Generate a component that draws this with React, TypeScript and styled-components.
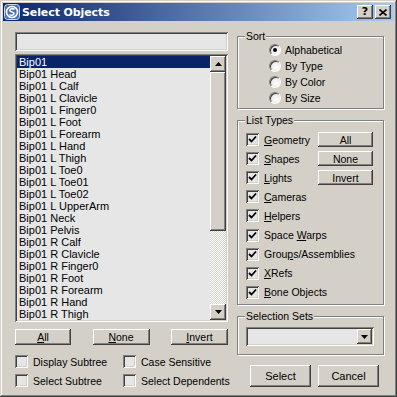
import React from 'react'
import styled, { createGlobalStyle } from 'styled-components'

const GlobalStyle = createGlobalStyle`
  html, body {
    margin: 0;
    padding: 0;
    background: #d4d0c8;
  }
  body {
    font-family: "Liberation Sans", Arial, sans-serif;
    font-size: 10.5px;
    color: #000;
  }
`

const FACE = '#d4d0c8'
const FIELD = '#e6e6e6'

const raised = `
  background: ${FACE};
  box-shadow: inset -1px -1px 0 #404040, inset 1px 1px 0 #ffffff,
    inset -2px -2px 0 #808080, inset 2px 2px 0 ${FACE};
`

const sunken = `
  box-shadow: inset 1px 1px 0 #808080, inset -1px -1px 0 #ffffff,
    inset 2px 2px 0 #404040, inset -2px -2px 0 ${FACE};
`

const Window = styled.div`
  width: 397px;
  height: 397px;
  box-sizing: border-box;
  padding: 3px;
  background: ${FACE};
  box-shadow: inset -1px -1px 0 #404040, inset 1px 1px 0 ${FACE},
    inset -2px -2px 0 #808080, inset 2px 2px 0 #ffffff;
  display: flex;
  flex-direction: column;
`

const TitleBar = styled.div`
  height: 18px;
  flex-shrink: 0;
  display: flex;
  align-items: center;
  padding-left: 1px;
  background: linear-gradient(to right, #0a246a, #a6caf0);
`

const TitleText = styled.span`
  margin-left: 2px;
  font-family: "DejaVu Sans", Verdana, sans-serif;
  font-weight: bold;
  font-size: 11px;
  color: #ffffff;
  letter-spacing: -0.1px;
`

const CaptionButtons = styled.div`
  margin-left: auto;
  display: flex;
  gap: 2px;
  padding-right: 3px;
`

const CaptionButton = styled.div`
  width: 16px;
  height: 14px;
  ${raised}
  display: flex;
  align-items: center;
  justify-content: center;
  font-family: "DejaVu Sans", sans-serif;
  font-weight: bold;
  font-size: 11px;
  line-height: 14px;
`

const Body = styled.div`
  display: flex;
  gap: 9px;
  padding: 11px 10px 0 12px;
`

const LeftCol = styled.div`
  width: 213px;
  display: flex;
  flex-direction: column;
`

const SearchField = styled.div`
  height: 19px;
  background: ${FIELD};
  ${sunken}
`

const ListBox = styled.div`
  margin-top: 3px;
  height: 268px;
  box-sizing: border-box;
  padding: 2px;
  background: ${FIELD};
  ${sunken}
  display: flex;
`

const Items = styled.div`
  flex: 1;
  display: flex;
  flex-direction: column;
`

const Item = styled.div<{ $selected?: boolean }>`
  height: 12px;
  line-height: 12px;
  font-size: 11px;
  padding-left: 2px;
  white-space: nowrap;
  background: ${(p) => (p.$selected ? '#0a246a' : 'transparent')};
  color: ${(p) => (p.$selected ? '#ffffff' : '#000000')};
`

const ScrollBar = styled.div`
  width: 16px;
  display: flex;
  flex-direction: column;
`

const ScrollButton = styled.div`
  height: 16px;
  ${raised}
  display: flex;
  align-items: center;
  justify-content: center;
`

const ScrollThumb = styled.div`
  height: 159px;
  ${raised}
`

const ScrollTrack = styled.div`
  flex: 1;
  background: repeating-conic-gradient(#ffffff 0 25%, ${FACE} 0 50%) 0 0 / 2px 2px;
`

const ButtonRow = styled.div`
  margin-top: 7px;
  display: flex;
  justify-content: space-between;
`

const Button = styled.div<{ $w: number; $h: number }>`
  width: ${(p) => p.$w}px;
  height: ${(p) => p.$h}px;
  ${raised}
  display: flex;
  align-items: center;
  justify-content: center;
  line-height: 12px;
  font-size: ${(p) => (p.$h > 18 ? 11 : 10.5)}px;
`

const OptionGrid = styled.div`
  margin-top: 10px;
  display: grid;
  grid-template-columns: 108px 1fr;
  row-gap: 6px;
`

const CheckLabel = styled.div`
  display: flex;
  align-items: center;
  gap: 5px;
  height: 13px;
  white-space: nowrap;
`

const Box = styled.div`
  width: 13px;
  height: 13px;
  flex-shrink: 0;
  background: ${FIELD};
  ${sunken}
  display: flex;
  align-items: center;
  justify-content: center;
`

const RightCol = styled.div`
  width: 147px;
  display: flex;
  flex-direction: column;
`

const Group = styled.div<{ $mt: number; $h: number }>`
  position: relative;
  margin-top: ${(p) => p.$mt}px;
  height: ${(p) => p.$h}px;
  box-sizing: border-box;
  border: 1px solid #808080;
  box-shadow: inset 1px 1px 0 #ffffff, 1px 1px 0 #ffffff;
`

const GroupCaption = styled.span`
  position: absolute;
  top: -7px;
  left: 7px;
  padding: 0 1px;
  line-height: 12px;
  background: ${FACE};
`

const RadioList = styled.div`
  padding: 5px 0 0 31px;
  display: flex;
  flex-direction: column;
`

const RadioRow = styled.div`
  height: 16px;
  display: flex;
  align-items: center;
  gap: 4px;
`

const Radio = styled.div`
  width: 12px;
  height: 12px;
  box-sizing: border-box;
  border-radius: 50%;
  border: 1px solid;
  border-color: #808080 #ffffff #ffffff #808080;
  background: radial-gradient(circle at 60% 60%, #ffffff 0, ${FIELD} 70%);
  box-shadow: inset 1px 1px 0 #404040;
  display: flex;
  align-items: center;
  justify-content: center;
`

const Dot = styled.div`
  width: 4px;
  height: 4px;
  border-radius: 50%;
  background: #000;
`

const TypesGrid = styled.div`
  padding: 9px 10px 0 8px;
  display: grid;
  grid-template-columns: minmax(0, 1fr) 55px;
  grid-auto-rows: 19.1px;
`

const TypeCell = styled.div`
  grid-column: 1;
  display: flex;
  align-items: center;
`

const TypeButton = styled(Button)`
  grid-column: 2;
  align-self: center;
`

const ComboWrap = styled.div`
  padding: 10px 9px 0 8px;
`

const Combo = styled.div`
  height: 19px;
  box-sizing: border-box;
  padding: 2px;
  background: ${FIELD};
  ${sunken}
  display: flex;
  justify-content: flex-end;
`

const ComboButton = styled.div`
  width: 15px;
  ${raised}
  display: flex;
  align-items: center;
  justify-content: center;
`

const Footer = styled.div`
  margin-top: 10px;
  display: flex;
  justify-content: flex-end;
  gap: 7px;
  padding-right: 5px;
`

const Key = styled.u`
  text-decoration-thickness: 1px;
  text-underline-offset: 1px;
`

const Arrow = ({ up }: { up?: boolean }) => (
  <svg width="7" height="4" viewBox="0 0 7 4">
    <path d={up ? 'M3.5 0 L7 4 L0 4 Z' : 'M0 0 L7 0 L3.5 4 Z'} fill="#000" />
  </svg>
)

const Check = () => (
  <svg width="9" height="9" viewBox="0 0 9 9">
    <path d="M1 4 L3.5 6.5 L8 1.5" stroke="#000" strokeWidth="1.8" fill="none" />
  </svg>
)

const CheckBox = ({ checked, children }: { checked?: boolean; children: React.ReactNode }) => (
  <CheckLabel>
    <Box>{checked && <Check />}</Box>
    <span>{children}</span>
  </CheckLabel>
)

const MaxIcon = () => (
  <svg width="16" height="16" viewBox="0 0 16 16">
    <rect x="0.5" y="0.5" width="15" height="15" rx="3" fill="#4a6fb8" stroke="#c8d8f0" />
    <circle cx="8" cy="8" r="5.5" fill="none" stroke="#ffffff" strokeWidth="1.6" />
    <path d="M10.5 5.5 C9 4 5.5 4.5 6 6.8 C6.4 8.5 10 7.6 10 9.6 C10 11.4 7 11.8 5.5 10.5" fill="none" stroke="#ffffff" strokeWidth="1.6" />
  </svg>
)

const objects = [
  'Bip01',
  'Bip01 Head',
  'Bip01 L Calf',
  'Bip01 L Clavicle',
  'Bip01 L Finger0',
  'Bip01 L Foot',
  'Bip01 L Forearm',
  'Bip01 L Hand',
  'Bip01 L Thigh',
  'Bip01 L Toe0',
  'Bip01 L Toe01',
  'Bip01 L Toe02',
  'Bip01 L UpperArm',
  'Bip01 Neck',
  'Bip01 Pelvis',
  'Bip01 R Calf',
  'Bip01 R Clavicle',
  'Bip01 R Finger0',
  'Bip01 R Foot',
  'Bip01 R Forearm',
  'Bip01 R Hand',
  'Bip01 R Thigh',
]

const sortModes = ['Alphabetical', 'By Type', 'By Color', 'By Size']

const App = () => {
  return (
    <>
      <GlobalStyle />
      <Window>
        <TitleBar>
          <MaxIcon />
          <TitleText>Select Objects</TitleText>
          <CaptionButtons>
            <CaptionButton>?</CaptionButton>
            <CaptionButton>
              <svg width="8" height="7" viewBox="0 0 8 7">
                <path d="M0.5 0.5 L7.5 6.5 M7.5 0.5 L0.5 6.5" stroke="#000" strokeWidth="1.6" />
              </svg>
            </CaptionButton>
          </CaptionButtons>
        </TitleBar>

        <Body>
          <LeftCol>
            <SearchField />
            <ListBox>
              <Items>
                {objects.map((name, i) => (
                  <Item key={name} $selected={i === 0}>
                    {name}
                  </Item>
                ))}
              </Items>
              <ScrollBar>
                <ScrollButton>
                  <Arrow up />
                </ScrollButton>
                <ScrollThumb />
                <ScrollTrack />
                <ScrollButton>
                  <Arrow />
                </ScrollButton>
              </ScrollBar>
            </ListBox>
            <ButtonRow>
              <Button $w={56} $h={16}>
                <Key>A</Key>ll
              </Button>
              <Button $w={57} $h={16}>
                <Key>N</Key>one
              </Button>
              <Button $w={57} $h={16}>
                <Key>I</Key>nvert
              </Button>
            </ButtonRow>
            <OptionGrid>
              <CheckBox>Display Subtree</CheckBox>
              <CheckBox>Case Sensitive</CheckBox>
              <CheckBox>Select Subtree</CheckBox>
              <CheckBox>Select Dependents</CheckBox>
            </OptionGrid>
          </LeftCol>

          <RightCol>
            <Group $mt={4} $h={73}>
              <GroupCaption>Sort</GroupCaption>
              <RadioList>
                {sortModes.map((mode, i) => (
                  <RadioRow key={mode}>
                    <Radio>{i === 0 && <Dot />}</Radio>
                    <span>{mode}</span>
                  </RadioRow>
                ))}
              </RadioList>
            </Group>

            <Group $mt={11} $h={185}>
              <GroupCaption>List Types</GroupCaption>
              <TypesGrid>
                <TypeCell>
                  <CheckBox checked><Key>G</Key>eometry</CheckBox>
                </TypeCell>
                <TypeButton $w={55} $h={15}>All</TypeButton>
                <TypeCell>
                  <CheckBox checked><Key>S</Key>hapes</CheckBox>
                </TypeCell>
                <TypeButton $w={55} $h={15}>None</TypeButton>
                <TypeCell>
                  <CheckBox checked><Key>L</Key>ights</CheckBox>
                </TypeCell>
                <TypeButton $w={55} $h={15}>Invert</TypeButton>
                <TypeCell>
                  <CheckBox checked><Key>C</Key>ameras</CheckBox>
                </TypeCell>
                <TypeCell>
                  <CheckBox checked><Key>H</Key>elpers</CheckBox>
                </TypeCell>
                <TypeCell>
                  <CheckBox checked>Space <Key>W</Key>arps</CheckBox>
                </TypeCell>
                <TypeCell>
                  <CheckBox checked>Grou<Key>p</Key>s/Assemblies</CheckBox>
                </TypeCell>
                <TypeCell>
                  <CheckBox checked><Key>X</Key>Refs</CheckBox>
                </TypeCell>
                <TypeCell>
                  <CheckBox checked><Key>B</Key>one Objects</CheckBox>
                </TypeCell>
              </TypesGrid>
            </Group>

            <Group $mt={11} $h={39}>
              <GroupCaption>Selection Sets</GroupCaption>
              <ComboWrap>
                <Combo>
                  <ComboButton>
                    <Arrow />
                  </ComboButton>
                </Combo>
              </ComboWrap>
            </Group>

            <Footer>
              <Button $w={61} $h={22}>Select</Button>
              <Button $w={61} $h={22}>Cancel</Button>
            </Footer>
          </RightCol>
        </Body>
      </Window>
    </>
  )
}

export default App
